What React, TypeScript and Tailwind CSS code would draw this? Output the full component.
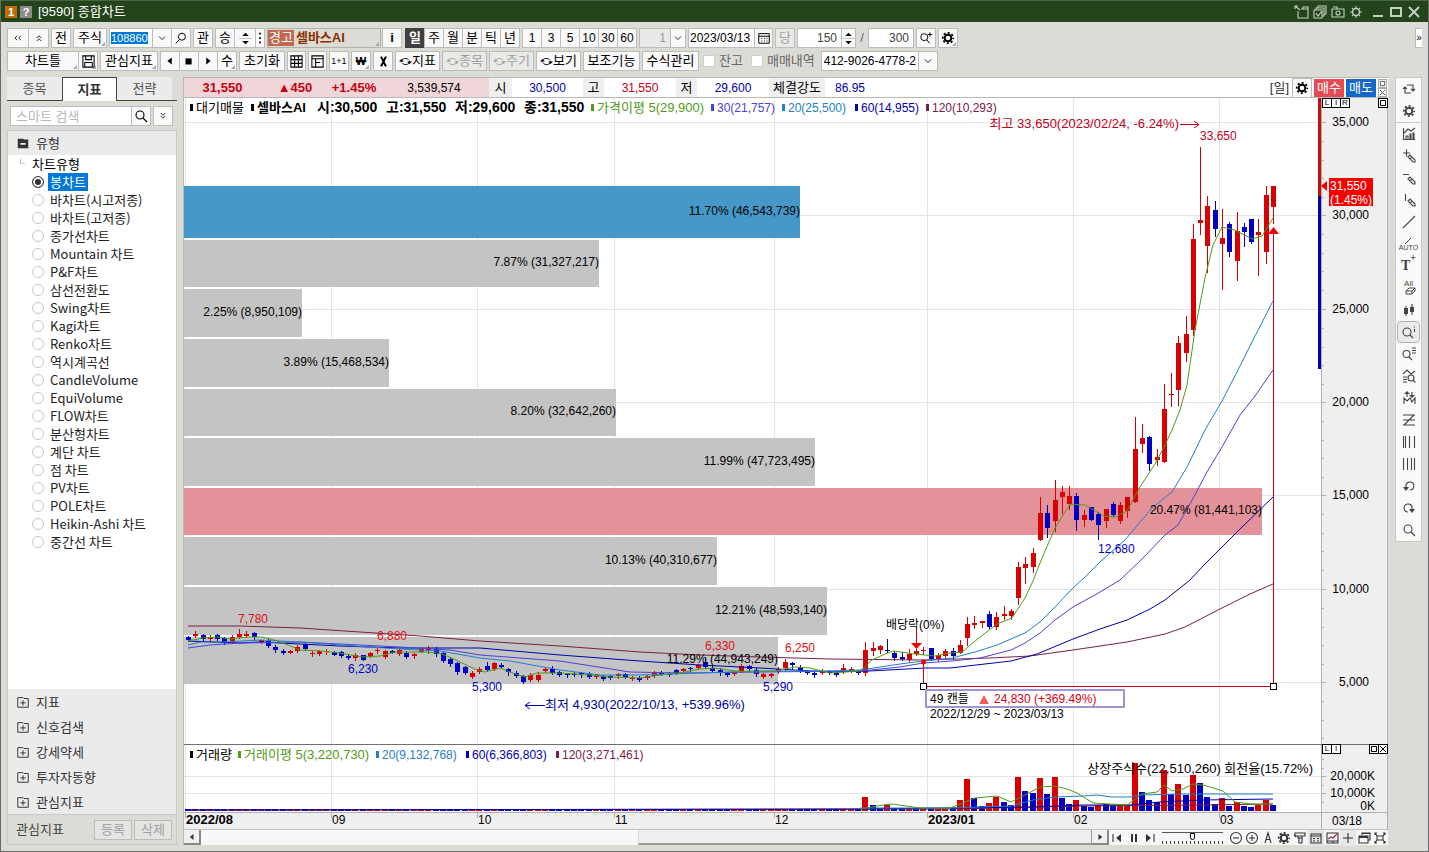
import React, { useState } from "react";

type Candle = [string, number, number, number, number];

// colour, high, body top, body bottom, low (chart units)
const candles: Candle[] = [
  ["b", 636, 637, 640, 641], ["r", 631, 634, 636, 637], ["b", 634, 635, 639, 640], ["r", 635, 637, 639, 641],
  ["b", 634, 635, 639, 640], ["b", 637, 638, 643, 644], ["r", 635, 637, 641, 642], ["r", 629, 634, 637, 638],
  ["r", 631, 634, 636, 637], ["b", 632, 633, 637, 640], ["r", 640, 640, 642, 643], ["b", 639, 641, 646, 647],
  ["b", 645, 647, 650, 652], ["b", 649, 651, 653, 654], ["r", 650, 651, 653, 653], ["r", 645, 647, 651, 652],
  ["b", 643, 644, 649, 650], ["r", 651, 653, 654, 656], ["r", 650, 651, 654, 655], ["r", 649, 651, 652, 654],
  ["b", 651, 652, 655, 655], ["b", 651, 652, 656, 657], ["b", 654, 656, 658, 659], ["r", 653, 655, 658, 660],
  ["b", 655, 655, 660, 660], ["r", 652, 653, 657, 657], ["r", 647, 650, 651, 653], ["r", 650, 651, 657, 658],
  ["b", 650, 651, 653, 653], ["r", 649, 650, 654, 655], ["b", 651, 653, 657, 658], ["r", 653, 654, 656, 658],
  ["r", 648, 649, 652, 652], ["r", 646, 649, 651, 653], ["b", 647, 649, 654, 656], ["b", 652, 653, 661, 662],
  ["b", 657, 659, 664, 666], ["b", 662, 663, 672, 674], ["b", 666, 667, 673, 674], ["r", 671, 673, 677, 678],
  ["r", 667, 669, 672, 673], ["b", 662, 666, 670, 671], ["r", 662, 663, 669, 670], ["b", 663, 665, 667, 668],
  ["b", 668, 669, 672, 675], ["b", 671, 673, 676, 677], ["b", 675, 676, 682, 683], ["r", 673, 675, 680, 681],
  ["r", 672, 675, 680, 681], ["r", 667, 669, 671, 672], ["b", 666, 669, 673, 674], ["b", 671, 672, 675, 676],
  ["b", 673, 674, 675, 677], ["b", 672, 674, 675, 676], ["b", 672, 673, 675, 677], ["b", 672, 674, 677, 678],
  ["r", 674, 675, 677, 678], ["b", 675, 676, 679, 680], ["b", 675, 676, 678, 679], ["r", 673, 674, 676, 678],
  ["b", 673, 674, 677, 678], ["r", 676, 678, 679, 680], ["b", 676, 678, 680, 681], ["r", 675, 676, 678, 679],
  ["r", 671, 672, 676, 677], ["b", 671, 673, 674, 675], ["b", 672, 674, 675, 676], ["b", 669, 670, 673, 674],
  ["r", 668, 669, 671, 672], ["b", 667, 668, 669, 671], ["r", 664, 665, 668, 669], ["b", 657, 662, 667, 668],
  ["b", 666, 668, 671, 672], ["b", 668, 670, 673, 675], ["b", 672, 673, 675, 676], ["r", 671, 672, 674, 675],
  ["r", 664, 666, 671, 672], ["b", 665, 666, 669, 670], ["b", 668, 670, 674, 676], ["r", 673, 674, 677, 678],
  ["r", 673, 674, 676, 677], ["r", 667, 669, 672, 673], ["r", 659, 662, 668, 670], ["b", 662, 663, 665, 669],
  ["b", 665, 667, 670, 672], ["b", 670, 671, 673, 674], ["b", 671, 673, 675, 677], ["r", 669, 671, 673, 674],
  ["b", 670, 671, 673, 674], ["b", 672, 673, 675, 676], ["r", 664, 668, 672, 673], ["r", 667, 669, 671, 672],
  ["b", 670, 671, 673, 674], ["r", 642, 650, 673, 675], ["r", 642, 648, 651, 655], ["r", 645, 646, 650, 653],
  ["b", 639, 650, 651, 652], ["b", 651, 653, 658, 660], ["b", 652, 657, 659, 660], ["r", 649, 654, 660, 661],
  ["r", 649, 651, 654, 655], ["r", 647, 650, 651, 654], ["b", 648, 648, 659, 660], ["r", 653, 655, 660, 661],
  ["r", 649, 651, 656, 657], ["b", 648, 651, 656, 659], ["r", 640, 645, 653, 653], ["r", 617, 624, 638, 645],
  ["r", 616, 623, 625, 628], ["r", 621, 621, 623, 627], ["b", 611, 614, 627, 628], ["r", 612, 617, 627, 629],
  ["r", 606, 614, 616, 619], ["r", 609, 611, 616, 619], ["r", 562, 567, 598, 604], ["r", 557, 564, 568, 583],
  ["r", 548, 553, 567, 572], ["r", 497, 513, 540, 540], ["b", 505, 513, 528, 537], ["r", 480, 500, 521, 531],
  ["r", 486, 492, 497, 513], ["r", 486, 496, 504, 509], ["b", 493, 496, 520, 530], ["r", 510, 515, 520, 526],
  ["b", 507, 507, 520, 520], ["b", 512, 514, 525, 539], ["r", 509, 509, 521, 527], ["b", 502, 504, 515, 516],
  ["r", 502, 505, 521, 523], ["r", 497, 497, 511, 517], ["r", 417, 449, 502, 502], ["r", 424, 438, 444, 452],
  ["b", 436, 437, 464, 470], ["r", 449, 457, 460, 465], ["r", 384, 409, 462, 462], ["r", 373, 394, 395, 406],
  ["r", 336, 343, 390, 405], ["r", 316, 334, 353, 361], ["r", 224, 239, 330, 335], ["r", 147, 220, 223, 234],
  ["r", 196, 206, 246, 272], ["b", 201, 210, 229, 236], ["r", 209, 238, 244, 289], ["b", 222, 224, 252, 256],
  ["r", 212, 231, 261, 280], ["b", 223, 227, 232, 246], ["b", 219, 219, 242, 243], ["r", 219, 232, 235, 275],
  ["r", 186, 195, 252, 263], ["r", 186, 186, 207, 223],
];

// volume bars from candle 93 on, colour and top
const volumes: [string, number][] = [
  ["r", 797], ["b", 805], ["b", 808], ["r", 805], ["b", 808], ["b", 809], ["r", 809], ["b", 809], ["r", 809],
  ["b", 808], ["r", 809], ["r", 809], ["b", 808], ["r", 800], ["r", 779], ["b", 798], ["b", 806], ["r", 803],
  ["r", 797], ["b", 802], ["b", 805], ["r", 777], ["b", 791], ["b", 793], ["r", 778], ["b", 794], ["r", 777],
  ["b", 798], ["b", 804], ["r", 800], ["b", 806], ["b", 807], ["r", 805], ["b", 804], ["b", 806], ["r", 806],
  ["r", 806], ["r", 763], ["b", 792], ["b", 800], ["b", 802], ["r", 770], ["b", 794], ["r", 784], ["b", 795],
  ["r", 775], ["b", 783], ["b", 797], ["b", 804], ["r", 798], ["b", 806], ["r", 802], ["b", 806], ["b", 807],
  ["r", 805], ["r", 800], ["b", 805],
];

const GREEN = "#4f9a18";
const SKY = "#2080c8";
const VIOLET = "#4a42dc";
const NAVY = "#0000a8";
const MAROON = "#7a2048";
const RED = "#d80000";
const BLUE = "#0000c4";

const priceLines = [
  { color: MAROON, points: "188,626 240,626 300,628 360,632 420,636 480,641 560,646 640,652 700,655 760,657 830,659 923,660 990,658 1030,656 1073,650 1127,642 1165,634 1185,627 1220,609 1250,594 1273,584" },
  { color: NAVY, points: "188,641 240,643 260,642 340,646 400,648 480,648 560,655 640,661 700,665 760,668 830,672 870,671 925,668 950,668 1011,661 1037,654 1073,639 1100,629 1127,620 1150,609 1165,600 1180,588 1190,580 1203,566 1240,529 1273,497" },
  { color: VIOLET, points: "188,648 210,645 240,643 300,642 340,644 400,647 450,650 480,655 560,661 630,672 680,673 760,672 860,671 900,667 923,663 952,661 980,658 1011,650 1025,643 1040,633 1055,620 1073,607 1095,595 1120,580 1142,559 1165,535 1178,525 1190,504 1207,472 1222,447 1240,415 1255,396 1273,370" },
  { color: SKY, points: "188,645 200,642 225,642 260,640 300,642 340,645 400,649 440,651 480,658 510,661 560,670 600,675 640,675 700,673 760,671 830,671 860,670 900,664 923,661 952,658 975,652 997,645 1011,639 1025,633 1040,622 1055,607 1073,588 1085,577 1102,560 1125,540 1152,508 1172,492 1187,467 1205,430 1222,401 1240,366 1253,340 1273,301" },
  { color: GREEN, points: "188,641 203,638 218,637 230,639 248,637 262,637 278,641 300,650 320,651 340,653 362,657 380,656 395,652 425,652 437,653 447,656 460,662 475,669 485,672 500,668 510,672 525,677 537,673 560,673 590,675 610,677 640,678 660,675 680,673 700,669 715,668 735,671 755,672 775,671 795,667 810,668 830,673 860,671 872,660 885,654 893,651 915,654 935,656 950,653 962,652 975,641 997,624 1012,618 1025,598 1033,581 1042,558 1055,528 1070,504 1085,505 1104,516 1115,517 1127,511 1140,487 1155,464 1165,445 1172,430 1180,410 1187,385 1195,330 1205,278 1213,245 1222,227 1235,230 1252,239 1262,236 1273,218" },
];

const volumeLines = [
  { color: MAROON, points: "188,810 950,809 1083,806 1200,805 1273,804" },
  { color: NAVY, points: "188,810 860,809 950,808 1033,807 1083,805 1130,805 1160,802 1203,800 1273,799" },
  { color: SKY, points: "860,808 950,808 1011,806 1033,800 1055,797 1083,796 1097,795 1112,797 1130,797 1140,795 1183,794 1273,794" },
  { color: GREEN, points: "860,809 883,805 892,804 920,808 950,808 975,798 997,796 1011,802 1025,795 1040,787 1055,786 1067,789 1077,793 1093,803 1127,805 1142,794 1157,792 1164,785 1172,791 1183,789 1193,784 1203,785 1223,791 1235,802 1252,804 1273,804" },
];

const profile = [
  { y: 186, h: 52, end: 800, fill: "#4698c8", label: "11.70% (46,543,739)" },
  { y: 240, h: 47, end: 599, fill: "#c4c4c4", label: "7.87% (31,327,217)" },
  { y: 289, h: 48, end: 302, fill: "#c4c4c4", label: "2.25% (8,950,109)" },
  { y: 339, h: 48, end: 389, fill: "#c4c4c4", label: "3.89% (15,468,534)" },
  { y: 389, h: 47, end: 616, fill: "#c4c4c4", label: "8.20% (32,642,260)" },
  { y: 438, h: 48, end: 815, fill: "#c4c4c4", label: "11.99% (47,723,495)" },
  { y: 488, h: 47, end: 1262, fill: "#e4929a", label: "20.47% (81,441,103)" },
  { y: 537, h: 48, end: 717, fill: "#c4c4c4", label: "10.13% (40,310,677)" },
  { y: 587, h: 48, end: 827, fill: "#c4c4c4", label: "12.21% (48,593,140)" },
  { y: 637, h: 47, end: 778, fill: "#c4c4c4", label: "11.29% (44,943,249)" },
];

const months = [
  { x: 185, label: "2022/08", bold: true },
  { x: 331, label: "09" },
  { x: 477, label: "10" },
  { x: 614, label: "11" },
  { x: 774, label: "12" },
  { x: 927, label: "2023/01", bold: true },
  { x: 1073, label: "02" },
  { x: 1219, label: "03" },
];

const prices = [
  { y: 122, label: "35,000" },
  { y: 215, label: "30,000" },
  { y: 309, label: "25,000" },
  { y: 402, label: "20,000" },
  { y: 495, label: "15,000" },
  { y: 589, label: "10,000" },
  { y: 682, label: "5,000" },
];

const peaks = [
  { x: 238, y: 623, label: "7,780", color: "#e01010" },
  { x: 377, y: 640, label: "6,880", color: "#e01010" },
  { x: 348, y: 673, label: "6,230", color: BLUE },
  { x: 472, y: 691, label: "5,300", color: BLUE },
  { x: 705, y: 650, label: "6,330", color: "#e01010" },
  { x: 785, y: 652, label: "6,250", color: "#e01010" },
  { x: 763, y: 691, label: "5,290", color: BLUE },
  { x: 1098, y: 553, label: "12,680", color: BLUE },
  { x: 1200, y: 140, label: "33,650", color: "#c00018" },
];

const chartTypes = [
  "봉차트", "바차트(시고저종)", "바차트(고저종)", "종가선차트", "Mountain 차트", "P&F차트", "삼선전환도",
  "Swing차트", "Kagi차트", "Renko차트", "역시계곡선", "CandleVolume", "EquiVolume", "FLOW차트", "분산형차트",
  "계단 차트", "점 차트", "PV차트", "POLE차트", "Heikin-Ashi 차트", "중간선 차트",
];

const candleX = (i: number) => Math.round(188 + i * 7.282);
const tone = (c: string) => (c === "r" ? RED : BLUE);

function Icon({ d, fill, size = 16, children }: { d?: string; fill?: string; size?: number; children?: React.ReactNode }) {
  return (
    <svg width={size} height={size} viewBox="0 0 16 16" fill="none" stroke="currentColor" strokeWidth="1.1" className="shrink-0">
      {d && <path d={d} />}
      {fill && <path d={fill} fill="currentColor" stroke="none" />}
      {children}
    </svg>
  );
}

function GearIcon({ size = 16 }: { size?: number }) {
  return (
    <Icon size={size}>
      <circle cx="8" cy="8" r="3.3" strokeWidth="2" />
      <circle cx="8" cy="8" r="5.2" strokeWidth="1.8" strokeDasharray="2.04 2.04" strokeDashoffset="1" />
    </Icon>
  );
}

const SearchIcon = () => <Icon d="M10 10l4 4"><circle cx="7" cy="7" r="4" /></Icon>;
const DownIcon = () => <Icon size={12} d="M4 6l4 4 4-4" />;

interface ToolProps {
  label?: string;
  className?: string;
  corner?: boolean;
  muted?: boolean;
  title?: string;
  children?: React.ReactNode;
}

function Tool({ label, className = "w-5", corner, muted, title, children }: ToolProps) {
  return (
    <button
      type="button"
      title={title}
      aria-label={title}
      className={`relative -ml-px flex h-5 shrink-0 items-center justify-center border border-[#bcbcba] whitespace-nowrap ${
        muted ? "bg-[#e9e9e7] text-[#a0a0a0]" : "bg-[#f9f9f9] text-black"
      } ${className}`}
    >
      {children}
      {label}
      {corner && (
        <svg width="4" height="4" viewBox="0 0 4 4" className="absolute right-px bottom-px">
          <path d="M4 0v4H0z" fill="#a8a8a8" />
        </svg>
      )}
    </button>
  );
}

function Group({ children }: { children: React.ReactNode }) {
  return <div className="flex pl-px">{children}</div>;
}

function Spinner({ className = "w-[15px]" }: { className?: string }) {
  return (
    <Tool title="증감" className={className}>
      <Icon size={13} fill="M4 5l4-4 4 4zM4 11l4 4 4-4z">
        <path d="M0 8h16" stroke="#bcbcba" />
      </Icon>
    </Tool>
  );
}

function TitleBar() {
  return (
    <header className="flex h-[22px] items-center border-t border-[#4a6546] bg-[#24451c] px-1 text-[13px] text-white">
      <span className="flex h-3 w-3 items-center justify-center bg-[#c06a08] text-[11px] font-bold">1</span>
      <span className="ml-[3px] flex h-3 w-3 items-center justify-center bg-[#8c8c8c] text-[11px] font-bold">?</span>
      <h1 className="ml-[6px]">[9590] 종합차트</h1>
      <div className="ml-auto flex items-center gap-[2px] pr-[2px] text-[#c4cfc0]">
        <button type="button" title="분리"><Icon d="M4 7v7h10V5H7M9 5V3h5v2M1 2l5 4M1 5V2h3" /></button>
        <button type="button" title="복사"><Icon d="M2 6h8v8H2zM4 6V4h8v8h-2M6 4V2h8v8h-2M4 9l2 3 4-5" /></button>
        <button type="button" title="캡처"><Icon d="M2 5h12v8H2zM3 3h4v2"><circle cx="8" cy="9" r="2" /></Icon></button>
        <button type="button" title="설정"><Icon d="M8 2v2M8 12v2M2 8h2M12 8h2M4 4l1 1M11 11l1 1M12 4l-1 1M5 11l-1 1"><circle cx="8" cy="8" r="3.500" strokeWidth="1.500" /></Icon></button>
        <button type="button" title="최소화" className="ml-1"><Icon fill="M3 11h10v2H3z" /></button>
        <button type="button" title="최대화"><Icon><path d="M3 4h10v8H3z" strokeWidth="2" /></Icon></button>
        <button type="button" title="닫기"><Icon><path d="M3 3l10 10M13 3L3 13" strokeWidth="2" /></Icon></button>
      </div>
    </header>
  );
}

function SymbolToolbar() {
  return (
    <div className="flex items-center gap-[2px]">
      <Group>
        <Tool title="이전" className="w-[22px] text-[#444]"><Icon size={12} d="M7 5L4 8l3 3M12 5L9 8l3 3" /></Tool>
        <Tool title="접기" className="w-[21px] text-[#444]"><Icon size={12} d="M5 8l3-3 3 3M5 12l3-3 3 3" /></Tool>
      </Group>
      <Group><Tool label="전" /></Group>
      <Group><Tool label="주식" corner className="w-[34px]" /></Group>
      <div className="flex">
        <div className="flex h-5 w-11 items-center border border-[#bcbcba] bg-white pl-px">
          <input aria-label="종목코드" defaultValue="108860" className="h-3 w-[37px] bg-[#0078d7] text-[11px] leading-3 text-white outline-none" />
        </div>
        <Tool title="종목 목록"><DownIcon /></Tool>
        <Tool title="종목 찾기"><Icon size={14} d="M6 10l-4 4"><circle cx="9" cy="6.500" r="4" /></Icon></Tool>
      </div>
      <Group><Tool label="관" className="w-5 text-[#444]" /></Group>
      <Group>
        <Tool label="승" className="w-5 text-[#555]" />
        <Spinner className="w-[22px]" />
        <Tool title="더보기" className="w-[10px]"><Icon size={14} fill="M7 2h2v2H7zM7 7h2v2H7zM7 12h2v2H7z" /></Tool>
      </Group>
      <button type="button" className="relative flex h-5 w-[114px] items-center border border-[#b0b0ae] bg-[#dedcd6] text-[13px] font-bold text-[#8a3000]">
        <span className="mr-[2px] bg-[#c06850] px-px leading-4 font-normal text-white">경고</span>
        셀바스AI
        <svg width="4" height="4" viewBox="0 0 4 4" className="absolute right-px bottom-px"><path d="M4 0v4H0z" fill="#a8a8a8" /></svg>
      </button>
      <Tool label="i" className="w-5 font-bold" />
      <Group>
        <button type="button" className="h-5 w-5 bg-[#404040] font-bold text-white">일</button>
        {["주", "월", "분", "틱", "년"].map((t) => <Tool key={t} label={t} />)}
      </Group>
      <Group>
        {["1", "3", "5", "10", "30", "60"].map((t) => <Tool key={t} label={t} className="w-5 text-[12px]" />)}
      </Group>
      <div className="flex text-[12px]">
        <input aria-label="주기" defaultValue="1" className="h-5 w-8 border border-[#bcbcba] bg-[#e9e9e7] pr-1 text-right text-[#999]" />
        <Tool title="주기 목록" className="w-4"><DownIcon /></Tool>
      </div>
      <div className="flex text-[12px]">
        <input aria-label="날짜" defaultValue="2023/03/13" className="h-5 w-[67px] border border-[#bcbcba] bg-white pl-px" />
        <Tool title="달력" className="w-[19px]"><Icon size={14} d="M2 3h12v11H2zM2 6h12M5 8.500h1M8 8.500h1M11 8.500h1M5 11.500h1M8 11.500h1M11 11.500h1" /></Tool>
      </div>
      <Group><Tool label="당" muted /></Group>
      <div className="flex text-[12px]">
        <input aria-label="표시 개수" defaultValue="150" className="h-5 w-[45px] border border-[#bcbcba] bg-white pr-1 text-right text-[#444]" />
        <Spinner />
      </div>
      <span className="w-2 text-center text-[#666]">/</span>
      <input aria-label="전체 개수" defaultValue="300" className="h-5 w-[46px] border border-[#bcbcba] bg-white pr-1 text-right text-[12px] text-[#444]" />
      <Group><Tool title="확대" className="w-5 text-[#444]"><Icon size={14} d="M9 10l3 4M10 4h5M12.500 1.500v5"><circle cx="6" cy="7" r="4" /></Icon></Tool></Group>
      <Group><Tool title="환경설정" corner className="w-5 text-[#444]"><GearIcon /></Tool></Group>
      <button type="button" title="더보기" className="ml-auto h-5 w-[7px] border border-r-0 border-[#bcbcba] bg-white text-[10px] leading-4">»</button>
    </div>
  );
}

const Cycle = () => <Icon size={13} d="M3 9V7a5 4 0 0 1 9-1M13 7v2a5 4 0 0 1-9 1" fill="M0 8l3-3 3 3zM10 8l3 3 3-3z" />;

function ChartToolbar() {
  return (
    <div className="flex items-center gap-[2px]">
      <Group>
        <Tool label="차트틀" corner className="w-[72px]" />
        <Tool title="저장" corner className="w-5 text-[#444]"><Icon size={15} d="M2 2h12v12H2zM5 2v4h6V2M4 14V9h8v5" /></Tool>
      </Group>
      <Group><Tool label="관심지표" corner className="w-[58px]" /></Group>
      <Group>
        <Tool title="뒤로"><Icon size={14} fill="M10 4v8L5 8z" /></Tool>
        <Tool title="정지" className="w-5 text-[#888]"><Icon size={14} fill="M4 5h7v7H4z" /></Tool>
        <Tool title="앞으로"><Icon size={14} fill="M6 4v8l5-4z" /></Tool>
        <Tool label="수" corner />
      </Group>
      <Group><Tool label="초기화" className="w-[46px]" /></Group>
      <Group><Tool title="표" className="w-[19px]"><Icon size={15} d="M2 2h12v12H2zM6 2v12M10 2v12M2 6h12M2 10h12" /></Tool></Group>
      <Group><Tool title="배치" className="w-[19px]"><Icon size={15} d="M2 2h12v12H2zM2 5h12M6 5v9M6 9h5" /></Tool></Group>
      <Group><Tool label="1+1" className="w-5 text-[9px]" /></Group>
      <Group><Tool label="₩" corner className="w-5 text-[11px] font-bold" /></Group>
      <Group><Tool title="도구"><Icon size={13}><path d="M5 2l6 12M11 2L5 14" strokeWidth="2.500" /></Icon></Tool></Group>
      <Group><Tool label="지표" className="w-[45px] text-[#444]"><Cycle /></Tool></Group>
      <Group><Tool label="종목" muted className="w-[45px]"><Cycle /></Tool></Group>
      <Group><Tool label="주기" muted className="w-[45px]"><Cycle /></Tool></Group>
      <Group><Tool label="보기" className="w-[45px]"><Cycle /></Tool></Group>
      <Group><Tool label="보조기능" className="w-[57px]" /></Group>
      <Group><Tool label="수식관리" className="w-[57px]" /></Group>
      <label className="ml-[2px] flex items-center gap-1 text-[#666]">
        <input type="checkbox" className="h-3 w-3 appearance-none border border-[#d0d0d0] bg-white" />잔고
      </label>
      <label className="ml-[6px] flex items-center gap-1 text-[#666]">
        <input type="checkbox" className="h-3 w-3 appearance-none border border-[#d0d0d0] bg-white" />매매내역
      </label>
      <div className="relative ml-1 flex">
        <select aria-label="계좌" className="h-5 w-[117px] appearance-none border border-[#bcbcba] bg-white pl-[2px] text-[12px]">
          <option>412-9026-4778-2</option>
        </select>
        <span className="pointer-events-none absolute right-0 flex h-5 w-5 items-center justify-center border border-[#bcbcba] bg-[#f9f9f9]"><DownIcon /></span>
      </div>
    </div>
  );
}

function Sidebar() {
  const [type, setType] = useState("봉차트");
  return (
    <aside className="flex w-[170px] shrink-0 flex-col">
      <nav className="flex h-6 text-[#555]">
        <button type="button" className="w-[55px] border-b border-[#444] bg-[#ebebeb]">종목</button>
        <button type="button" className="w-[55px] border border-b-0 border-[#444] bg-white font-bold text-[#333]">지표</button>
        <button type="button" className="w-[55px] border-b border-[#444] bg-[#ebebeb]">전략</button>
        <span className="flex-1 border-b border-[#444]" />
      </nav>
      <div className="flex gap-[2px] px-[3px] pt-[5px] pb-1">
        <div className="flex">
          <input aria-label="검색" placeholder="스마트 검색" className="h-5 w-[122px] border border-[#bcbcba] bg-white pl-[5px] placeholder:text-[#b8b8b8]" />
          <Tool title="검색" className="w-5 text-[#444]"><SearchIcon /></Tool>
        </div>
        <Group><Tool title="펼치기" className="w-5 text-[#444]"><Icon size={12} d="M5 4l3 3 3-3M5 8l3 3 3-3" /></Tool></Group>
      </div>
      <section className="flex flex-1 flex-col border border-b-0 border-[#c8c8c4] bg-white font-['Noto_Sans_CJK_KR',sans-serif]">
        <h2 className="flex h-6 items-center gap-[6px] bg-[#ebebeb] pl-2 text-[#333]">
          <Icon size={14} fill="M2 3h6l1 1h5v10H2zM5 8v2h6V8z" />유형
        </h2>
        <p className="flex h-[18px] items-center pl-2"><span className="w-4 text-[9px] text-[#444]">└</span>차트유형</p>
        {chartTypes.map((name) => (
          <label key={name} className="flex h-[18px] items-center gap-1 pl-6">
            <input
              type="radio"
              name="chartType"
              checked={type === name}
              onChange={() => setType(name)}
              className="h-3 w-3 appearance-none rounded-full border border-[#c8c8c8] bg-white checked:border-[#444] checked:bg-[#333] checked:shadow-[inset_0_0_0_2px_white]"
            />
            <span className={`px-[2px] leading-[18px] ${type === name ? "bg-[#0078d7] text-white" : "text-[#222]"}`}>{name}</span>
          </label>
        ))}
        <div className="mt-auto bg-[#ebebeb]">
          {["지표", "신호검색", "강세약세", "투자자동향", "관심지표"].map((name) => (
            <button key={name} type="button" className="flex h-[25px] w-full items-center gap-[6px] pl-2 text-[#333]">
              <Icon size={14} d="M2 3h6l1 1h5v10H2zM5 9h6M8 6v6" />{name}
            </button>
          ))}
        </div>
      </section>
      <footer className="flex h-[31px] items-center gap-[2px] border border-[#c8c8c4] px-2 text-[#444]">
        <span className="mr-auto">관심지표</span>
        <button type="button" className="h-5 w-[38px] border border-[#bcbcba] bg-[#e4e4e2] leading-4 text-[#a0a0a0]">등록</button>
        <button type="button" className="-mr-1 h-5 w-[38px] border border-[#bcbcba] bg-[#e4e4e2] leading-4 text-[#a0a0a0]">삭제</button>
      </footer>
    </aside>
  );
}

function QuoteBar() {
  return (
    <div className="flex h-5 items-center border-b border-[#b8b8b8] bg-white text-[12px]">
      <div className="flex h-full w-[305px] items-center bg-[#f0d6d8] text-[13px] font-bold text-[#c80010]">
        <span className="w-[77px] text-center">31,550</span>
        <span className="w-[68px] text-center">▲450</span>
        <span className="w-[50px] text-center">+1.45%</span>
        <span className="flex-1 text-center text-[12px] font-normal text-black">3,539,574</span>
      </div>
      <span className="flex h-full w-[23px] items-center justify-center bg-[#efefef] text-[13px]">시</span>
      <span className="w-[71px] text-center text-[#0000b0]">30,500</span>
      <span className="flex h-full w-[21px] items-center justify-center bg-[#efefef] text-[13px]">고</span>
      <span className="w-[72px] text-center text-[#c80010]">31,550</span>
      <span className="flex h-full w-[21px] items-center justify-center bg-[#efefef] text-[13px]">저</span>
      <span className="w-[72px] text-center text-[#0000b0]">29,600</span>
      <span className="flex h-full w-[56px] items-center justify-center bg-[#efefef] text-[13px]">체결강도</span>
      <span className="w-[50px] text-center text-[#0000b0]">86.95</span>
      <div className="ml-auto flex items-center gap-[2px] pr-px text-[13px]">
        <span className="mr-px text-[#333]">[일]</span>
        <Group><Tool title="설정" className="w-5 text-[#444]"><GearIcon /></Tool></Group>
        <button type="button" className="h-[18px] w-[30px] bg-[#e84a54] leading-[18px] text-white">매수</button>
        <button type="button" className="h-[18px] w-[30px] bg-[#1468c8] leading-[18px] text-white">매도</button>
        <div className="flex flex-col text-[#444]">
          <button type="button" title="확대" className="flex h-[9px] w-[9px] items-center justify-center border border-[#aaa]"><Icon size={7}><path d="M3 3h10v10H3z" strokeWidth="2" /></Icon></button>
          <button type="button" title="닫기" className="flex h-[9px] w-[9px] items-center justify-center border border-[#aaa]"><Icon size={7}><path d="M2 2l12 12M14 2L2 14" strokeWidth="2" /></Icon></button>
        </div>
      </div>
    </div>
  );
}

function PaneButtons({ left, right }: { left: string[]; right: string[] }) {
  return (
    <div className="absolute top-0 right-0 flex w-[66px] justify-between">
      <div className="flex">
        {left.map((t) => (
          <button key={t} type="button" className="-mr-px h-[10px] w-[10px] border border-black bg-white text-[8px] leading-[8px]">{t}</button>
        ))}
      </div>
      <div className="flex">
        {right.map((t) => (
          <button key={t} type="button" title={t} className="-ml-px flex h-[10px] w-[10px] items-center justify-center border border-black bg-white">
            <Icon size={8}><path d={t === "닫기" ? "M2 2l12 12M14 2L2 14" : "M3 3h10v10H3z"} strokeWidth="2" /></Icon>
          </button>
        ))}
      </div>
    </div>
  );
}

function Legend({ x, y, color, mark = true, size = 12, bold, children }: { x: number; y: number; color: string; mark?: boolean; size?: number; bold?: boolean; children: string }) {
  return (
    <>
      {mark && <rect x={x - 6} y={y - 8} width="3" height="7" fill={color} />}
      <text x={x} y={y} fill={color} fontSize={size} fontWeight={bold ? 700 : 400}>{children}</text>
    </>
  );
}

function PricePane() {
  return (
    <div className="relative">
      <svg viewBox="184 98 1204 646" className="block h-auto w-full bg-white" fontSize="12">
        <g stroke="#e4e4e4" shapeRendering="crispEdges">
          {prices.map((p) => <line key={p.y} x1="184" x2="1321" y1={p.y} y2={p.y} />)}
          {months.map((m) => <line key={m.x} x1={m.x} x2={m.x} y1="98" y2="744" />)}
        </g>
        {profile.map((p) => <rect key={p.y} x="184" y={p.y} width={p.end - 184} height={p.h} fill={p.fill} />)}

        <g shapeRendering="crispEdges">
          {candles.map(([c, high, top, bottom, low], i) => (
            <g key={i} fill={tone(c)}>
              <rect x={candleX(i)} y={high} width="1" height={low - high + 1} />
              <rect x={candleX(i) - 2} y={top} width="5" height={Math.max(bottom - top, 1)} />
            </g>
          ))}
        </g>
        <g fill="none" strokeWidth="1">
          {priceLines.map((l) => <polyline key={l.color} points={l.points} stroke={l.color} />)}
        </g>
        {profile.map((p) => <text key={p.y} x={p.end} y={Math.floor(p.y + p.h / 2 + 3)} textAnchor="end">{p.label}</text>)}
        {peaks.map((p) => <text key={p.label} x={p.x} y={p.y} fill={p.color}>{p.label}</text>)}

        <Legend x={196} y={112} color="#000" size={13}>대기매물</Legend>
        <Legend x={257} y={112} color="#000" size={13} bold>셀바스AI</Legend>
        <Legend x={317} y={112} color="#000" size={14} bold mark={false}>시:30,500</Legend>
        <Legend x={386} y={112} color="#000" size={14} bold mark={false}>고:31,550</Legend>
        <Legend x={455} y={112} color="#000" size={14} bold mark={false}>저:29,600</Legend>
        <Legend x={524} y={112} color="#000" size={14} bold mark={false}>종:31,550</Legend>
        <Legend x={597} y={112} color={GREEN} size={13}>가격이평 5(29,900)</Legend>
        <Legend x={717} y={112} color={VIOLET}>30(21,757)</Legend>
        <Legend x={788} y={112} color={SKY}>20(25,500)</Legend>
        <Legend x={861} y={112} color={NAVY}>60(14,955)</Legend>
        <Legend x={932} y={112} color={MAROON}>120(10,293)</Legend>

        <path d="M1180 124.500h18M1194 121l5 3.500-5 3.500" fill="none" stroke="#c00018" />
        <text x="1179" y="128" textAnchor="end" fill="#c00018" fontSize="13">최고 33,650(2023/02/24, -6.24%)</text>
        <path d="M545 705.500h-19M530 702l-5 3.500 5 3.500" fill="none" stroke={NAVY} />
        <text x="545" y="709" fill={NAVY} fontSize="13">최저 4,930(2022/10/13, +539.96%)</text>

        <text x="886" y="629">배당락(0%)</text>
        <rect x="916" y="630" width="1" height="14" fill="#e00000" />
        <path d="M911 643h11l-5.500 6z" fill="#f00000" />

        {/* range measure tool */}
        <g fill="#d00014" shapeRendering="crispEdges">
          <rect x="923" y="662" width="1" height="25" />
          <rect x="923" y="686" width="351" height="1" />
          <rect x="1273" y="232" width="1" height="455" />
        </g>
        <circle cx="923.500" cy="662" r="2.500" fill="#f00000" />
        <path d="M1268 234l5.500-7 5.500 7z" fill="#f00000" />
        <g fill="#fff" stroke="#000">
          <rect x="920.500" y="683.500" width="6" height="6" />
          <rect x="1270.500" y="683.500" width="6" height="6" />
        </g>
        <rect x="926" y="690" width="198" height="17" fill="#fff" stroke="#9c96d4" strokeWidth="2" />
        <text x="930" y="703">49 캔들</text>
        <path d="M979 704l5-9 5 9z" fill="#f86060" />
        <text x="994" y="703" fill="#d80010">24,830 (+369.49%)</text>
        <text x="930" y="718">2022/12/29 ~ 2023/03/13</text>

        <rect x="1318" y="98" width="3" height="98" fill="#c80c0c" />
        <rect x="1318" y="196" width="3" height="173" fill="#0000b0" />
        <rect x="1321" y="98" width="67" height="646" fill="#efefef" />
        <g stroke="#b0b0b0" shapeRendering="crispEdges">
          <line x1="1321" x2="1321" y1="98" y2="744" />
          <line x1="1387" x2="1387" y1="98" y2="744" />
          {prices.map((p) => (
            <React.Fragment key={p.y}>
              <line x1="1321" x2="1326" y1={p.y} y2={p.y} />
              {[19, 38, 56, 75].filter((o) => p.y + o < 740).map((o) => <line key={o} x1="1321" x2="1324" y1={p.y + o} y2={p.y + o} />)}
            </React.Fragment>
          ))}
        </g>
        {prices.map((p) => <text key={p.y} x="1369" y={p.y + 4} textAnchor="end">{p.label}</text>)}
        <path d="M1321 186l6-5v10z" fill="#f00000" />
        <rect x="1329" y="178" width="44" height="28" fill="#f80000" />
        <text x="1330" y="190" fill="#fff">31,550</text>
        <text x="1330" y="204" fill="#fff">(1.45%)</text>
      </svg>
      <PaneButtons left={["L", "I", "R"]} right={["확대"]} />
    </div>
  );
}

function VolumePane() {
  return (
    <div className="relative">
      <svg viewBox="184 744 1204 85" className="block h-auto w-full bg-white" fontSize="12">
        <g stroke="#e4e4e4" shapeRendering="crispEdges">
          <line x1="184" x2="1321" y1="776" y2="776" />
          <line x1="184" x2="1321" y1="793" y2="793" />
          {months.map((m) => <line key={m.x} x1={m.x} x2={m.x} y1="744" y2="812" />)}
        </g>
        <g shapeRendering="crispEdges">
          {candles.slice(0, 93).map(([c], i) => <rect key={i} x={candleX(i) - 3} y="809" width="6" height="2" fill={tone(c)} />)}
          {volumes.map(([c, top], i) => <rect key={i} x={candleX(i + 93) - 3} y={top} width="6" height={811 - top} fill={tone(c)} />)}
        </g>
        <g fill="none">
          {volumeLines.map((l) => <polyline key={l.color} points={l.points} stroke={l.color} />)}
        </g>
        <Legend x={196} y={759} color="#000" size={13}>거래량</Legend>
        <Legend x={244} y={759} color={GREEN} size={13}>거래이평 5(3,220,730)</Legend>
        <Legend x={382} y={759} color={SKY}>20(9,132,768)</Legend>
        <Legend x={472} y={759} color={NAVY}>60(6,366,803)</Legend>
        <Legend x={562} y={759} color={MAROON}>120(3,271,461)</Legend>
        <text x="1313" y="773" textAnchor="end" fontSize="13">상장주식수(22,510,260) 회전율(15.72%)</text>

        <rect x="1321" y="744" width="67" height="85" fill="#efefef" />
        <rect x="184" y="812" width="1204" height="17" fill="#efefef" />
        <g stroke="#b0b0b0" shapeRendering="crispEdges">
          <line x1="184" x2="1388" y1="812.5" y2="812.5" />
          <line x1="1321" x2="1321" y1="744" y2="829" />
          <line x1="1387" x2="1387" y1="744" y2="829" />
          {months.map((m) => <line key={m.x} x1={m.x} x2={m.x} y1="812" y2="818" />)}
          {[759, 768, 776, 785, 793, 802].map((y) => <line key={y} x1="1321" x2={y === 776 || y === 793 ? 1326 : 1324} y1={y} y2={y} />)}
        </g>
        <line x1="184" x2="1388" y1="744.5" y2="744.5" stroke="#707070" />
        <text x="1375" y="780" textAnchor="end">20,000K</text>
        <text x="1375" y="797" textAnchor="end">10,000K</text>
        <text x="1375" y="810" textAnchor="end">0K</text>
        {months.map((m) => <text key={m.x} x={m.x + 1} y="824" fontSize={m.bold ? 13 : 12} fontWeight={m.bold ? 700 : 400}>{m.label}</text>)}
        <text x="1332" y="825">03/18</text>
      </svg>
      <PaneButtons left={["L", "I"]} right={["확대", "닫기"]} />
    </div>
  );
}

function ScrollRow() {
  return (
    <div className="flex h-4 items-center border-t border-[#c0c0c0] bg-[#f6f6f6] text-[#333]">
      <button type="button" title="왼쪽" className="flex h-full w-[17px] items-center justify-center border-r-2 border-b-2 border-[#888] bg-[#f0f0f0]"><Icon size={12} fill="M10 4v8L5 8z" /></button>
      <div className="flex h-full flex-1 justify-end bg-[#f8f8f8]">
        <div className="h-full w-[51%] border-r border-b-2 border-l border-[#999] border-l-[#ddd] bg-[#efefef]" />
      </div>
      <button type="button" title="오른쪽" className="flex h-full w-[17px] items-center justify-center border-r-2 border-b-2 border-[#888] bg-[#f0f0f0]"><Icon size={12} fill="M6 4v8l5-4z" /></button>
      <div className="flex pl-px">
        <button type="button" title="처음"><Icon d="M3 4v8" fill="M11 4v8L6 8z" /></button>
        <button type="button" title="일시정지"><Icon fill="M5 4h2v8H5zM9 4h2v8H9z" /></button>
        <button type="button" title="끝"><Icon d="M12 4v8" fill="M4 4v8l5-4z" /></button>
      </div>
      <input
        type="range"
        aria-label="확대 비율"
        defaultValue={50}
        className="mx-1 h-3 w-[61px] appearance-none border-t border-[#555] bg-[repeating-linear-gradient(90deg,#444_0_1px,transparent_1px_4px)] bg-size-[100%_3px] bg-bottom bg-no-repeat [&::-webkit-slider-thumb]:mb-1 [&::-webkit-slider-thumb]:h-[7px] [&::-webkit-slider-thumb]:w-[5px] [&::-webkit-slider-thumb]:appearance-none [&::-webkit-slider-thumb]:rounded-b-sm [&::-webkit-slider-thumb]:border [&::-webkit-slider-thumb]:border-black [&::-webkit-slider-thumb]:bg-white"
      />
      <div className="flex pl-px">
        <button type="button" title="축소"><Icon d="M5 8h6"><circle cx="8" cy="8" r="5.500" /></Icon></button>
        <button type="button" title="확대"><Icon d="M5 8h6M8 5v6"><circle cx="8" cy="8" r="5.500" /></Icon></button>
        <button type="button" title="글자"><Icon d="M5 13l3-10 3 10M6 9.500h4" /></button>
        <button type="button" title="설정"><GearIcon size={16} /></button>
        <button type="button" title="도구"><Icon d="M3 3h10v3H3zM6 6v2h4V6M7 8v5h3V8M2 5l2 2" /></button>
        <button type="button" title="데이터" className="bg-[#e4e4e4]"><Icon d="M3 4h10v9H3zM3 6h10M5 8.500h2M9 8.500h2M5 11h2M9 11h2" /></button>
        <button type="button" title="차트"><Icon d="M3 3h11v10H3zM3 11h11M9 11v2"><path d="M4 9l3-2 2 1 4-4" stroke="#a02030" /></Icon></button>
        <button type="button" title="십자선" className="bg-[#e8e8e8]"><Icon d="M8 3v10M3 8h10" /></button>
        <button type="button" title="창"><Icon d="M6 5V3h8v7h-2M3 6h9v7H3z" fill="M3 6h9v2H3zM6 3h8v1H6z" /></button>
        <button type="button" title="전체화면"><Icon d="M3 5V3h2M11 3h2v2M3 11v2h2M11 13h2v-2M5 6h6v4H5zM3 3l2 3M13 3l-2 3M3 13l2-3M13 13l-2-3" /></button>
      </div>
    </div>
  );
}

const PENCIL = "M7 9l2-2 5 5v2h-2zM9 11l2-2";

const drawTools: { title: string; icon: React.ReactNode; active?: boolean }[] = [
  { title: "차트분석", icon: <Icon d="M2.500 2v11.500H14M3 7l4-4 3 2 4-3M5 13v-3h2v3M9 13V8h1v5M12 13V7h1v6" /> },
  { title: "십자 그리기", icon: <Icon d={`M2 5h7M5.500 1.500v7${PENCIL}`} /> },
  { title: "수평선", icon: <Icon d={`M2 4.500h6${PENCIL}`} /> },
  { title: "수직선", icon: <Icon d={`M4.500 2v7${PENCIL}`} /> },
  { title: "추세선", icon: <Icon d="M2 14L14 2" /> },
  {
    title: "자동추세선",
    icon: (
      <span className="flex flex-col items-center">
        <svg width="8" height="6" viewBox="0 0 8 6"><path d="M1 6l6-6" stroke="currentColor" /></svg>
        <span className="text-[7px] leading-[7px]">AUTO</span>
      </span>
    ),
  },
  { title: "문자", icon: <span className="flex font-['Liberation_Serif',serif] text-[14px] leading-4 font-bold">T<sup className="text-[10px] leading-[10px]">+</sup></span> },
  {
    title: "전체삭제",
    icon: (
      <span className="flex flex-col">
        <span className="text-[8px] leading-[6px]">All</span>
        <svg width="15" height="8" viewBox="0 0 15 8" fill="none"><path d="M5 4l3-3h6l-3 3zM5 4v3h6V4M11 7l3-3V1" stroke="currentColor" /></svg>
      </span>
    ),
  },
  { title: "봉", icon: <Icon d="M5 4v10M11 2v11" fill="M3 6h4v6H3zM9 5h4v5H9z" /> },
  { title: "정보 조회", active: true, icon: <Icon d="M9 11l3 3M13.500 5v3M13.500 2.500v1"><circle cx="6" cy="8" r="4" /></Icon> },
  { title: "목록 조회", icon: <Icon d="M8 11l3 3M11 2h4M11 4.500h4M11 7h4"><circle cx="5.500" cy="8" r="3.500" /></Icon> },
  { title: "패턴 조회", icon: <Icon d="M2 6l4-4 4 4 4-3M2 9h4M2 11.500h4M2 14h4M12 12l2.500 2.500"><circle cx="10" cy="10" r="3" /></Icon> },
  { title: "파동", icon: <Icon d="M3 14V8l3 3 3-3 2 4 3-4v6M6 7V2M11 2v5" fill="M3 4l3-3 3 3zM8 5l3 3 3-3z" /> },
  { title: "되돌림", icon: <Icon d="M2 3h12M2 8h12M2 13h12M13 3L3 13" /> },
  { title: "시간대", icon: <Icon d="M2.500 2v12M4.500 2v12M8.500 2v12M13.500 2v12" /> },
  { title: "등간격", icon: <Icon d="M2.500 2v12M6.500 2v12M10.500 2v12M13.500 2v12" /> },
  { title: "되돌리기", icon: <Icon d="M5 10V7a4 4 0 1 1 4 5" fill="M2 9h6l-3 4z" /> },
  { title: "다시하기", icon: <Icon d="M11 10V7a4 4 0 1 0-4 5" fill="M8 9h6l-3 4z" /> },
  { title: "돋보기", icon: <SearchIcon /> },
];

function DrawToolbar() {
  return (
    <aside className="flex w-[27px] shrink-0 flex-col items-center self-start border border-[#c8c8c4] bg-[#f9f9f9] text-[#444]">
      <button type="button" title="새로고침" className="flex h-[22px] items-center"><Icon d="M6 4h6v6M10 12H4V6M2 8l2-2 2 2M10 8l2 2 2-2" /></button>
      <button type="button" title="설정" className="flex h-[22px] items-center"><GearIcon /></button>
      <span className="h-px w-full bg-[#c8c8c4]" />
      {drawTools.map((t) => (
        <button
          key={t.title}
          type="button"
          title={t.title}
          className={`flex h-[22px] w-[23px] items-center justify-center ${t.active ? "rounded-sm border border-[#b0b0b0] bg-[#ebebeb]" : ""}`}
        >
          {t.icon}
        </button>
      ))}
    </aside>
  );
}

export default function App() {
  return (
    <div className="flex min-h-screen flex-col border border-t-0 border-[#6a6a6a] bg-[#dcdcd6] font-['Liberation_Sans','Noto_Sans_CJK_KR',sans-serif] text-[13px] leading-4 text-black">
      <TitleBar />
      <div className="flex flex-col gap-[3px] px-[6px] pt-[6px] pb-[6px]">
        <SymbolToolbar />
        <ChartToolbar />
      </div>
      <div className="flex flex-1 px-[6px] pb-[6px]">
        <Sidebar />
        <main className="ml-[6px] mr-[7px] flex min-w-0 flex-1 flex-col border-t border-l border-[#b8b8b8]">
          <QuoteBar />
          <PricePane />
          <VolumePane />
          <ScrollRow />
        </main>
        <DrawToolbar />
      </div>
    </div>
  );
}
